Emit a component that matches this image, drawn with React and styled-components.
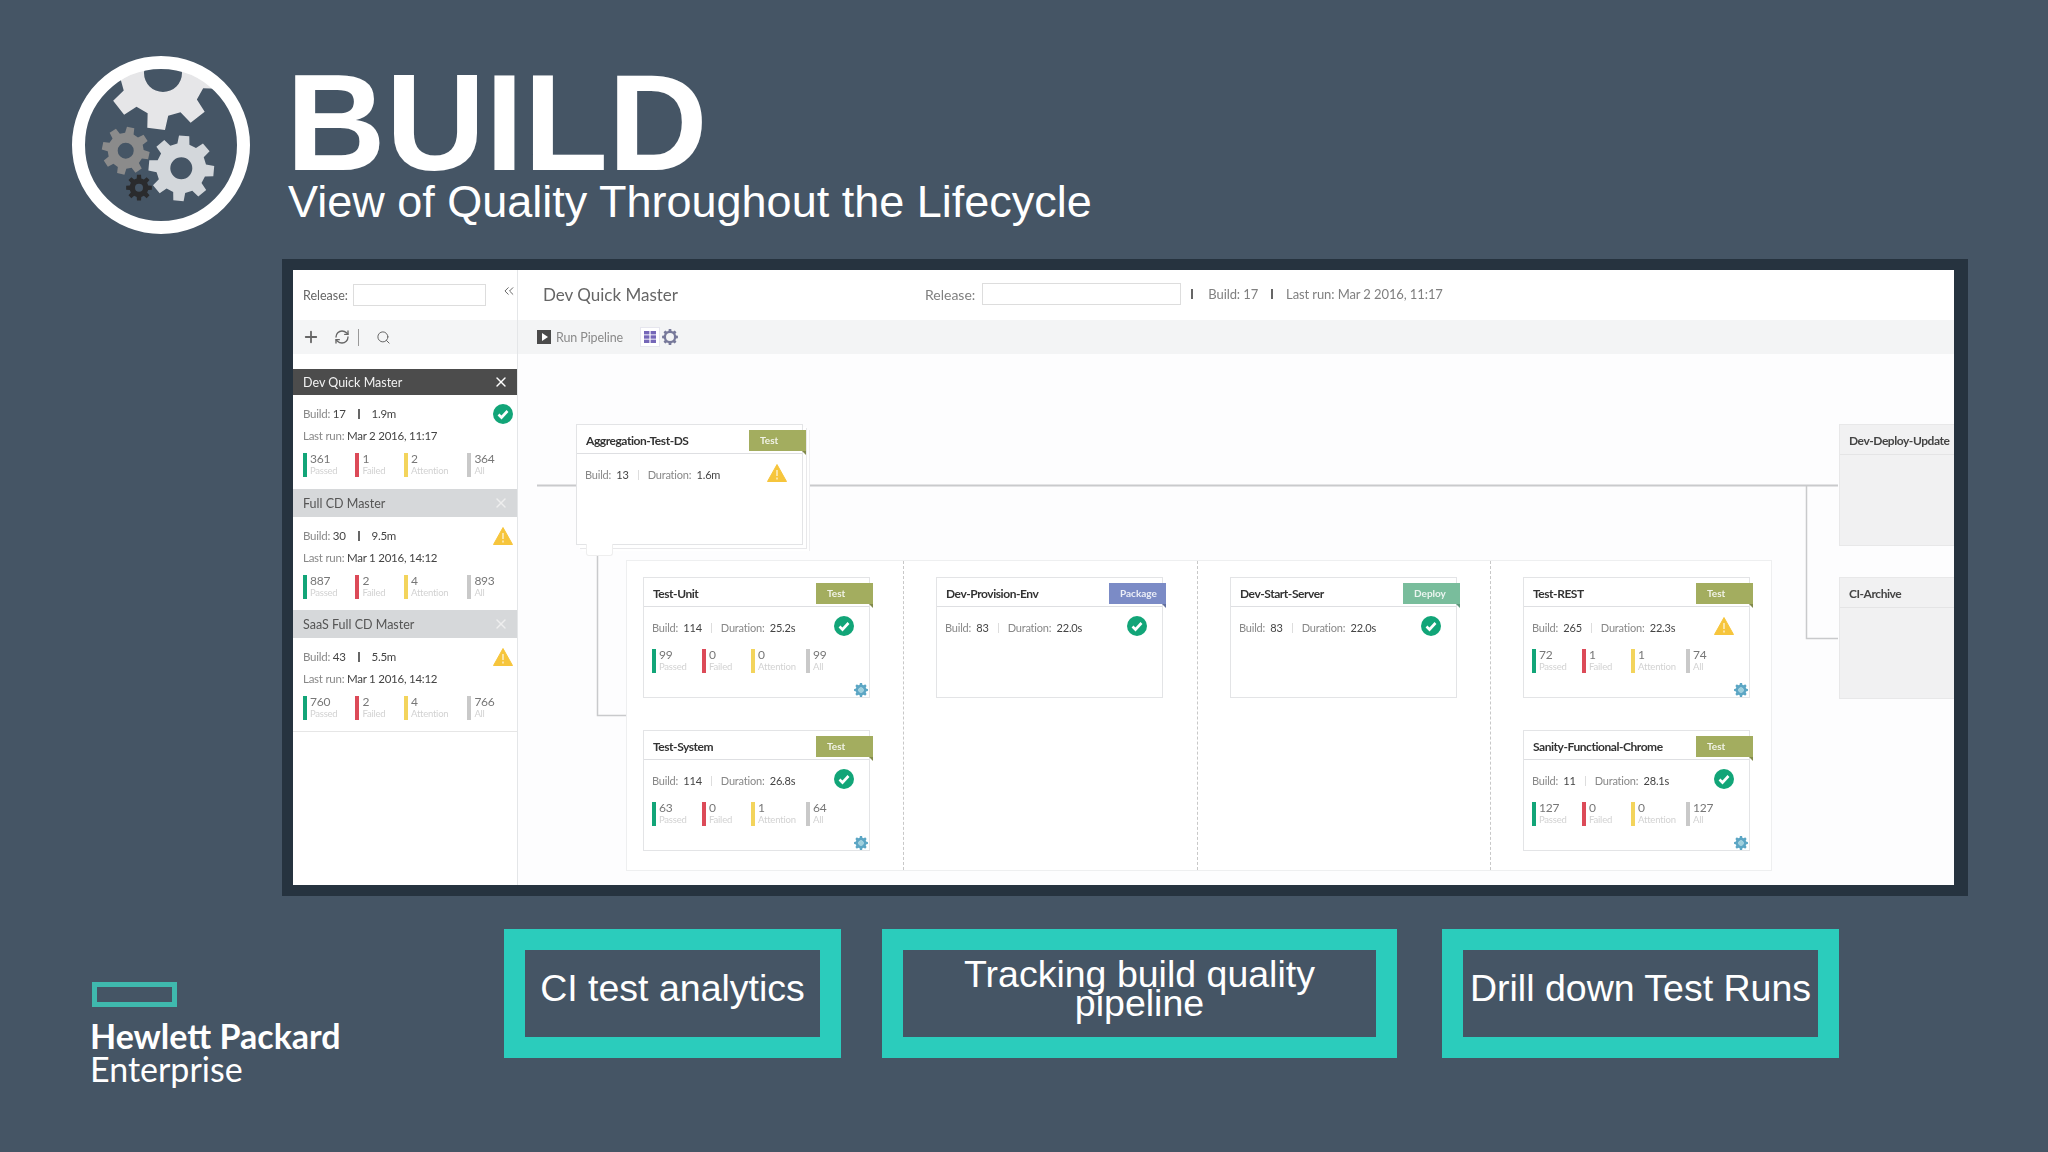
import styled, { createGlobalStyle } from "styled-components";
import { ChevronsLeft, Plus, RefreshCw, Search, X } from "lucide-react";

const GlobalStyle = createGlobalStyle`
  html, body { margin: 0; padding: 0; background: #455565; }
  * { box-sizing: border-box; }
`;

const UI_FONT = `"Lato", "Noto Sans", sans-serif`;

const gearPath = (cx, cy, outer, root, hole, teeth, rot = 0) => {
  const step = (Math.PI * 2) / teeth;
  const pts = [];
  for (let i = 0; i < teeth; i++) {
    const a = (rot * Math.PI) / 180 + i * step;
    [
      [root, -0.31],
      [outer, -0.2],
      [outer, 0.2],
      [root, 0.31],
    ].forEach(([r, k]) => {
      const t = a + k * step;
      pts.push(`${(cx + r * Math.cos(t)).toFixed(2)} ${(cy + r * Math.sin(t)).toFixed(2)}`);
    });
  }
  const ring = `M${cx - hole} ${cy}a${hole} ${hole} 0 1 0 ${hole * 2} 0a${hole} ${hole} 0 1 0 ${-hole * 2} 0Z`;
  return `M${pts.join("L")}Z${ring}`;
};

const Page = styled.div`
  width: 2048px;
  height: 1152px;
  background: #455565;
  overflow: hidden;
  font-family: "Liberation Sans", Arial, sans-serif;
  padding-top: 56px;
`;

const Hero = styled.header`
  display: flex;
  padding-left: 72px;
  height: 178px;
`;

const TitleBlock = styled.div`
  margin-left: 38px;
  color: #fff;
`;

const Title = styled.h1`
  margin: 0 0 0 -2px;
  font-size: 138px;
  line-height: 100px;
  padding-top: 16px;
  font-weight: 700;
`;

const Subtitle = styled.p`
  margin: 5px 0 0;
  font-size: 45px;
  line-height: 50px;
`;

const Frame = styled.section`
  width: 1686px;
  height: 637px;
  margin: 25px 0 0 282px;
  padding: 11px 14px 11px 11px;
  background: #26333f;
`;

const Screen = styled.div`
  display: flex;
  height: 100%;
  background: #fff;
  font-family: ${UI_FONT};
  filter: blur(0.4px);
  overflow: hidden;
`;

const Sidebar = styled.aside`
  width: 225px;
  flex: none;
  border-right: 1px solid #e4e6e8;
`;

const SideTop = styled.div`
  display: flex;
  align-items: center;
  height: 50px;
  padding-left: 10px;
  font-size: 12.5px;
  color: #666;
  svg { margin-left: 15px; color: #666; margin-top: -8px; }
`;

const Input = styled.div`
  width: ${(p) => p.$w}px;
  height: 22px;
  margin-left: ${(p) => p.$gap}px;
  border: 1px solid #ddd;
  background: #fff;
`;

const SideTools = styled.div`
  display: flex;
  align-items: center;
  height: 34px;
  padding-left: 9px;
  background: #f4f5f6;
  color: #666;
`;

const ToolDivider = styled.span`
  width: 1px;
  height: 17px;
  margin: 0 17px 0 8px;
  background: #999;
`;

const PipelineList = styled.div`
  margin-top: 15px;
  border-bottom: 1px solid #e6e6e6;
`;

const PipelineHead = styled.div`
  display: flex;
  align-items: center;
  justify-content: space-between;
  height: ${(p) => (p.$active ? 26 : 28)}px;
  padding: 0 8px 0 10px;
  background: ${(p) => (p.$active ? "#4c4c4c" : "#d6d8da")};
  color: ${(p) => (p.$active ? "#f2f2f2" : "#555")};
  font-size: 12.5px;
  svg { color: ${(p) => (p.$active ? "#fff" : "#eee")}; }
`;

const PipelineBody = styled.div`
  position: relative;
  height: ${(p) => (p.$active ? 94 : 93)}px;
  padding: 8.5px 10px 0;
  font-size: 11.5px;
  letter-spacing: -0.25px;
  color: #777;
`;

const Muted = styled.span`
  color: #888;
`;

const Strong = styled.span`
  color: #444;
`;

const Sep = styled.span`
  display: inline-block;
  width: ${(p) => p.$thin ? 1 : 2}px;
  height: 10px;
  margin: 0 ${(p) => p.$gap || 12}px;
  background: ${(p) => p.$color || "#666"};
  vertical-align: -1px;
`;

const InfoLine = styled.div`
  height: ${(p) => p.$h}px;
  line-height: ${(p) => p.$h}px;
  white-space: nowrap;
`;

const StatRow = styled.div`
  display: flex;
  margin-top: ${(p) => p.$top}px;
`;

const Stat = styled.div`
  position: relative;
  width: ${(p) => p.$w}px;
  height: 24px;
  padding-left: 7px;
  &::before {
    content: "";
    position: absolute;
    left: 0;
    top: 0;
    width: 3.5px;
    height: 24px;
    background: ${(p) => p.$color};
  }
`;

const StatValue = styled.div`
  font-size: 12px;
  line-height: 12px;
  color: #777;
`;

const StatLabel = styled.div`
  font-size: 9.5px;
  line-height: 11px;
  color: #d2d2d2;
  white-space: nowrap;
`;

const StatusSlot = styled.div`
  position: absolute;
  right: ${(p) => p.$right}px;
  top: ${(p) => p.$top}px;
  width: 20px;
  height: 20px;
`;

const Main = styled.main`
  display: flex;
  flex-direction: column;
  flex: 1;
  min-width: 0;
`;

const MainTop = styled.div`
  display: flex;
  align-items: center;
  height: 50px;
  padding: 0 0 2px 25px;
  color: #808080;
  font-size: 14px;
`;

const MainTitle = styled.div`
  width: 382px;
  font-size: 17px;
  color: #666;
`;

const MetaText = styled.span`
  margin-left: ${(p) => p.$left}px;
  font-size: 13px;
  letter-spacing: -0.1px;
`;

const MainTools = styled.div`
  display: flex;
  align-items: center;
  height: 34px;
  padding-left: 19px;
  background: #f3f4f5;
`;

const PlayBox = styled.span`
  display: flex;
  align-items: center;
  justify-content: center;
  width: 14px;
  height: 14px;
  background: #4a4a4a;
  &::after {
    content: "";
    border-left: 6px solid #fff;
    border-top: 4px solid transparent;
    border-bottom: 4px solid transparent;
    margin-left: 2px;
  }
`;

const RunLabel = styled.span`
  width: 84px;
  margin-left: 5px;
  font-size: 12.5px;
  color: #8a8a8a;
  letter-spacing: -0.1px;
`;

const ViewButton = styled.span`
  display: flex;
  align-items: center;
  justify-content: center;
  width: 20px;
  height: 20px;
  background: #fff;
  border: 1px solid #e6e6ee;
  margin-right: 2px;
`;

const Canvas = styled.div`
  position: relative;
  flex: 1;
  background: #fdfdfe;
  overflow: hidden;
`;

const Wires = styled.svg`
  position: absolute;
  left: 0;
  top: 0;
`;

const Card = styled.div`
  position: relative;
  width: 227px;
  height: 121px;
  background: #fff;
  border: 1px solid #e3e4e6;
`;

const FloatingCard = styled(Card)`
  position: absolute;
  left: 58px;
  top: 70px;
  box-shadow: 3px 3px 0 #fff, 4px 4px 0 #e8e8ea, 6px 6px 0 #fff, 7px 6px 0 #eeeef0;
`;

const CardTab = styled.div`
  position: absolute;
  left: 9px;
  top: 119px;
  width: 27px;
  height: 12px;
  background: #fff;
  border: 1px solid #eee;
  border-top: 0;
  border-radius: 0 0 3px 3px;
`;

const CardHead = styled.div`
  height: 29px;
  line-height: 31px;
  padding-left: 9px;
  border-bottom: 1px solid #dedfe2;
  font-size: 12px;
  font-weight: 700;
  letter-spacing: -0.45px;
  color: #333;
  white-space: nowrap;
`;

const Tag = styled.div`
  position: absolute;
  right: -4px;
  top: 5px;
  width: 57px;
  height: 21px;
  padding-left: 11px;
  line-height: 21px;
  font-size: 10px;
  font-weight: 700;
  color: rgba(255, 255, 255, 0.85);
  background: ${(p) => p.$color};
  &::after {
    content: "";
    position: absolute;
    right: 0;
    bottom: -4px;
    border-right: 4px solid ${(p) => p.$color};
    border-bottom: 4px solid transparent;
    filter: brightness(0.8);
  }
`;

const CardBody = styled.div`
  padding: 14px 8px 0;
  font-size: 11px;
  letter-spacing: -0.2px;
  color: #888;
`;

const CogSlot = styled.div`
  position: absolute;
  right: 1px;
  bottom: 2px;
  width: 14px;
  height: 14px;
`;

const StagePanel = styled.div`
  position: absolute;
  left: 108px;
  top: 206px;
  display: flex;
  width: 1146px;
  height: 311px;
  background: #fff;
  border: 1px solid #eeeff0;
`;

const Stage = styled.div`
  display: flex;
  flex-direction: column;
  gap: 32px;
  width: ${(p) => p.$w}px;
  padding: 16px 0 0 ${(p) => p.$pad}px;
  border-right: ${(p) => (p.$last ? "none" : "1px dashed #c8c8c8")};
`;

const GhostNode = styled.div`
  position: absolute;
  left: 1321px;
  top: ${(p) => p.$top}px;
  width: 130px;
  height: 122px;
  background: #f1f1f2;
  border: 1px solid #e8e8e9;
`;

const GhostHead = styled.div`
  height: 30px;
  line-height: 32px;
  padding-left: 9px;
  border-bottom: 1px solid #e4e4e5;
  font-size: 12px;
  font-weight: 700;
  letter-spacing: -0.45px;
  color: #444;
  white-space: nowrap;
`;

const BottomRow = styled.footer`
  display: flex;
  margin-top: 33px;
  padding-left: 92px;
`;

const HpeLogo = styled.div`
  width: 412px;
  padding-top: 53px;
  color: #fff;
  font-family: "Lato", sans-serif;
`;

const HpeMark = styled.div`
  width: 85px;
  height: 25px;
  border: 5px solid #3fb9ae;
`;

const HpeName = styled.div`
  margin: 11px 0 0 -2px;
  font-size: 34px;
  line-height: 36px;
  font-weight: 700;
`;

const HpeSub = styled.div`
  margin-left: -2px;
  font-size: 34px;
  line-height: 29px;
  font-weight: 400;
`;

const Callout = styled.div`
  display: flex;
  align-items: center;
  justify-content: center;
  width: ${(p) => p.$w}px;
  height: 129px;
  margin-right: ${(p) => p.$gap}px;
  padding-bottom: 10px;
  border: 21px solid #2bccbc;
  color: #fff;
  font-size: 37.5px;
  line-height: 29px;
  text-align: center;
  white-space: nowrap;
`;

const GREEN = "#12a578";
const RED = "#dc4a58";
const YELLOW = "#f3d45c";
const GREY = "#c9c9c9";

const TAGS = { Test: "#a3ad5f", Package: "#7b8bc6", Deploy: "#79bd9c" };

const Status = ({ kind }) =>
  kind === "ok" ? (
    <svg width="20" height="20" viewBox="0 0 20 20">
      <circle cx="10" cy="10" r="10" fill={GREEN} />
      <path d="M5.5 10.5l3 3 6-6.5" fill="none" stroke="#fff" strokeWidth="2.6" />
    </svg>
  ) : (
    <svg width="20" height="20" viewBox="0 0 20 20">
      <path d="M10 1.5L19.5 18.5H.5Z" fill="#f6c53c" stroke="#f6c53c" strokeLinejoin="round" />
      <path d="M10 7v6M10 14.5v2" stroke="#fbe7b0" strokeWidth="1.8" />
    </svg>
  );

const Cog = ({ size = 14, color = "#5ca6c4" }) => (
  <svg width={size} height={size} viewBox="0 0 28 28">
    <path d={gearPath(14, 14, 14, 11, 5, 8, 0)} fill={color} fillRule="evenodd" />
    <circle cx="14" cy="14" r="5" fill="#9fd0dd" />
  </svg>
);

const BuildLogo = () => (
  <svg width="178" height="178" viewBox="0 0 178 178">
    <defs>
      <clipPath id="logoClip">
        <circle cx="89" cy="89" r="77" />
      </clipPath>
    </defs>
    <g clipPath="url(#logoClip)">
      <path d={gearPath(91, 17, 57, 43, 19, 8, 7)} fill="#e6e6e8" fillRule="evenodd" />
    </g>
    <path d={gearPath(53.7, 94.7, 24, 18, 8, 8, 12)} fill="#8b8b8b" fillRule="evenodd" />
    <path d={gearPath(67, 131.7, 13, 9.5, 4, 8, 0)} fill="#2a2b2d" fillRule="evenodd" />
    <path d={gearPath(109.3, 112.3, 33, 25, 11, 8, 5)} fill="#d3d7db" fillRule="evenodd" />
    <circle cx="89" cy="89" r="82.5" fill="none" stroke="#fff" strokeWidth="13" />
  </svg>
);

const Stats = ({ values, widths, top }) => {
  const kinds = [
    ["Passed", GREEN],
    ["Failed", RED],
    ["Attention", YELLOW],
    ["All", GREY],
  ];
  return (
    <StatRow $top={top}>
      {kinds.map(([label, color], i) => (
        <Stat key={label} $color={color} $w={widths[i]}>
          <StatValue>{values[i]}</StatValue>
          <StatLabel>{label}</StatLabel>
        </Stat>
      ))}
    </StatRow>
  );
};

const pipelines = [
  { name: "Dev Quick Master", build: 17, time: "1.9m", run: "Mar 2 2016, 11:17", status: "ok", stats: [361, 1, 2, 364], active: true },
  { name: "Full CD Master", build: 30, time: "9.5m", run: "Mar 1 2016, 14:12", status: "warn", stats: [887, 2, 4, 893] },
  { name: "SaaS Full CD Master", build: 43, time: "5.5m", run: "Mar 1 2016, 14:12", status: "warn", stats: [760, 2, 4, 766] },
];

const stages = [
  {
    w: 277,
    pad: 16,
    cards: [
      { name: "Test-Unit", tag: "Test", build: 114, time: "25.2s", status: "ok", stats: [99, 0, 0, 99] },
      { name: "Test-System", tag: "Test", build: 114, time: "26.8s", status: "ok", stats: [63, 0, 1, 64] },
    ],
  },
  { w: 294, pad: 32, cards: [{ name: "Dev-Provision-Env", tag: "Package", build: 83, time: "22.0s", status: "ok" }] },
  { w: 293, pad: 32, cards: [{ name: "Dev-Start-Server", tag: "Deploy", build: 83, time: "22.0s", status: "ok" }] },
  {
    w: 280,
    pad: 32,
    last: true,
    cards: [
      { name: "Test-REST", tag: "Test", build: 265, time: "22.3s", status: "warn", stats: [72, 1, 1, 74] },
      { name: "Sanity-Functional-Chrome", tag: "Test", build: 11, time: "28.1s", status: "ok", stats: [127, 0, 0, 127] },
    ],
  },
];

const NodeBody = ({ node }) => (
  <>
    <CardHead>{node.name}</CardHead>
    <Tag $color={TAGS[node.tag]}>{node.tag}</Tag>
    <CardBody>
      <InfoLine $h={14}>
        <Muted>Build:</Muted> &nbsp;<Strong>{node.build}</Strong>
        <Sep $gap={9} $thin $color="#ddd" />
        <Muted>Duration:</Muted> &nbsp;<Strong>{node.time}</Strong>
      </InfoLine>
      {node.stats && <Stats values={node.stats} widths={[50, 49, 55, 40]} top={14} />}
    </CardBody>
    <StatusSlot $right={15} $top={38}>
      <Status kind={node.status} />
    </StatusSlot>
    {node.stats && (
      <CogSlot>
        <Cog />
      </CogSlot>
    )}
  </>
);

export default function App() {
  return (
    <Page>
      <GlobalStyle />
      <Hero>
        <BuildLogo />
        <TitleBlock>
          <Title>BUILD</Title>
          <Subtitle>View of Quality Throughout the Lifecycle</Subtitle>
        </TitleBlock>
      </Hero>

      <Frame>
        <Screen>
          <Sidebar>
            <SideTop>
              Release:
              <Input $w={135} $gap={5} />
              <ChevronsLeft size={16} strokeWidth={1.5} />
            </SideTop>
            <SideTools>
              <Plus size={18} strokeWidth={2.4} />
              <RefreshCw size={16} strokeWidth={2} style={{ marginLeft: 14 }} />
              <ToolDivider />
              <Search size={15} strokeWidth={1.6} />
            </SideTools>
            <PipelineList>
              {pipelines.map((p) => (
                <div key={p.name}>
                  <PipelineHead $active={p.active}>
                    {p.name}
                    <X size={16} strokeWidth={2} />
                  </PipelineHead>
                  <PipelineBody $active={p.active}>
                    <InfoLine $h={20}>
                      <Muted>Build:</Muted> <Strong>{p.build}</Strong>
                      <Sep />
                      <Strong>{p.time}</Strong>
                    </InfoLine>
                    <InfoLine $h={24}>
                      <Muted>Last run:</Muted> <Strong>{p.run}</Strong>
                    </InfoLine>
                    <Stats values={p.stats} widths={[53, 49, 64, 40]} top={5} />
                    <StatusSlot $right={4} $top={9}>
                      <Status kind={p.status} />
                    </StatusSlot>
                  </PipelineBody>
                </div>
              ))}
            </PipelineList>
          </Sidebar>

          <Main>
            <MainTop>
              <MainTitle>Dev Quick Master</MainTitle>
              Release:
              <Input $w={199} $gap={7} />
              <Sep $gap={10} />
              <MetaText $left={5}>Build: 17</MetaText>
              <Sep $gap={13} />
              <MetaText $left={0}>Last run: Mar 2 2016, 11:17</MetaText>
            </MainTop>
            <MainTools>
              <PlayBox />
              <RunLabel>Run Pipeline</RunLabel>
              <ViewButton>
                <svg width="12" height="12" viewBox="0 0 12 12" fill="#7567b8">
                  <rect width="5.4" height="3.4" />
                  <rect x="6.6" width="5.4" height="3.4" />
                  <rect y="4.3" width="5.4" height="3.4" />
                  <rect x="6.6" y="4.3" width="5.4" height="3.4" />
                  <rect y="8.6" width="5.4" height="3.4" />
                  <rect x="6.6" y="8.6" width="5.4" height="3.4" />
                </svg>
              </ViewButton>
              <svg width="16" height="16" viewBox="0 0 28 28">
                <path d={gearPath(14, 14, 14, 11, 7, 8, 0)} fill="#77799a" fillRule="evenodd" />
              </svg>
            </MainTools>
            <Canvas>
              <Wires width="1437" height="531" fill="none" stroke="#c9cacc">
                <path d="M19 131.5H58M285 131.5H1320" strokeWidth="2" />
                <path d="M1288.5 131.5V284.5H1320" strokeWidth="1.5" />
                <path d="M79.5 195V361.5H108" strokeWidth="1.5" />
              </Wires>

              <FloatingCard>
                <NodeBody node={{ name: "Aggregation-Test-DS", tag: "Test", build: 13, time: "1.6m", status: "warn" }} />
                <CardTab />
              </FloatingCard>

              <StagePanel>
                {stages.map((stage) => (
                  <Stage key={stage.cards[0].name} $w={stage.w} $pad={stage.pad} $last={stage.last}>
                    {stage.cards.map((card) => (
                      <Card key={card.name}>
                        <NodeBody node={card} />
                      </Card>
                    ))}
                  </Stage>
                ))}
              </StagePanel>

              <GhostNode $top={70}>
                <GhostHead>Dev-Deploy-Update</GhostHead>
              </GhostNode>
              <GhostNode $top={223}>
                <GhostHead>CI-Archive</GhostHead>
              </GhostNode>
            </Canvas>
          </Main>
        </Screen>
      </Frame>

      <BottomRow>
        <HpeLogo>
          <HpeMark />
          <HpeName>Hewlett Packard</HpeName>
          <HpeSub>Enterprise</HpeSub>
        </HpeLogo>
        <Callout $w={337} $gap={41}>CI test analytics</Callout>
        <Callout $w={515} $gap={45}>
          Tracking build quality
          <br />
          pipeline
        </Callout>
        <Callout $w={397} $gap={0}>Drill down Test Runs</Callout>
      </BottomRow>
    </Page>
  );
}
